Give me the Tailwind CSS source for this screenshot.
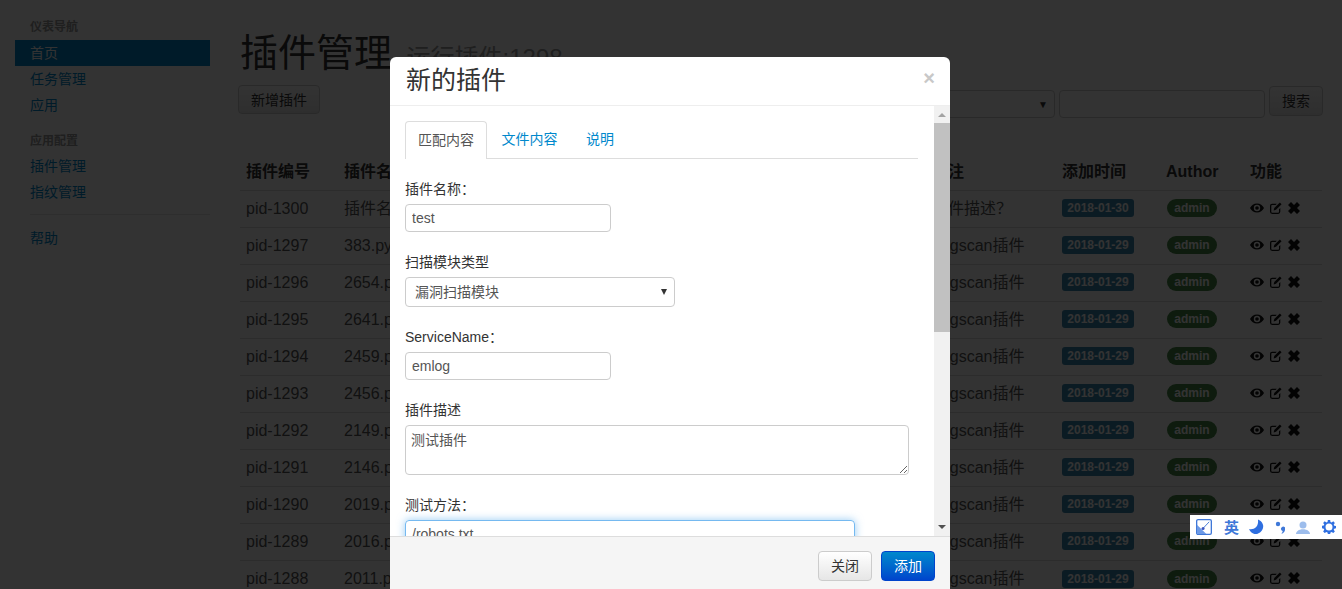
<!DOCTYPE html>
<html lang="en">
<head>
    <meta charset="UTF-8">
    <meta name="viewport" content="width=device-width, initial-scale=1.0">
    <title>插件管理</title>
    <script src="https://cdn.jsdelivr.net/npm/@tailwindcss/browser@4"></script>
</head>
<body class="relative h-[589px] overflow-hidden bg-white text-[#333] [font-family:'Liberation_Sans','Noto_Sans_CJK_SC',sans-serif]">
    <svg class="hidden">
        <symbol id="eye" viewBox="0 0 14 14"><path fill-rule="evenodd" d="M7 2.5C3.8 2.5 1.3 4.600 0 7c1.300 2.400 3.800 4.500 7 4.500s5.700-2.100 7-4.500c-1.300-2.400-3.800-4.500-7-4.500zM7 3.800a3.200 3.200 0 1 1 0 6.400 3.200 3.200 0 0 1 0-6.400zM7 5.200a1.800 1.800 0 1 0 0 3.600 1.800 1.800 0 0 0 0-3.600z"/></symbol>
        <symbol id="edit" viewBox="0 0 14 14"><path d="M2.500 2H8L6.500 3.500h-4a1 1 0 0 0-1 1v7a1 1 0 0 0 1 1h7a1 1 0 0 0 1-1V8.500L12 7v4.500A2.500 2.500 0 0 1 9.500 14h-7A2.500 2.500 0 0 1 0 11.500v-7A2.500 2.500 0 0 1 2.500 2z"/><path d="M11.500.5l2 2-6.500 6.500-2.800.8.800-2.800z"/></symbol>
        <symbol id="del" viewBox="0 0 14 14"><path d="M3.500 0L7 3.500 10.500 0 14 3.500 10.500 7 14 10.500 10.500 14 7 10.500 3.500 14 0 10.500 3.500 7 0 3.500z"/></symbol>
    </svg>

    <div class="flex">
        <!-- sidebar -->
        <div class="w-[240px] shrink-0 pt-[17px] pl-[15px] pr-[30px] text-sm">
            <div class="pl-[15px] h-5 leading-5 text-xs font-bold text-[#999]">仪表导航</div>
            <a class="block mt-[3px] h-[26px] leading-[26px] pl-[15px] bg-[#0088cc] text-white">首页</a>
            <a class="block h-[26px] leading-[26px] pl-[15px] text-[#0088cc]">任务管理</a>
            <a class="block h-[26px] leading-[26px] pl-[15px] text-[#0088cc]">应用</a>
            <div class="pl-[15px] mt-[13px] h-5 leading-5 text-xs font-bold text-[#999]">应用配置</div>
            <a class="block mt-[2px] h-[26px] leading-[26px] pl-[15px] text-[#0088cc]">插件管理</a>
            <a class="block h-[26px] leading-[26px] pl-[15px] text-[#0088cc]">指纹管理</a>
            <div class="mt-[9px] ml-[15px] border-t border-[#e5e5e5]"></div>
            <a class="block mt-[10px] h-[26px] leading-[26px] pl-[15px] text-[#0088cc]">帮助</a>
        </div>

        <!-- main -->
        <div class="w-[1082px] shrink-0 pt-[28px]">
            <h1 class="h-[50px] leading-[50px] text-[38px] whitespace-nowrap">插件管理 <span class="ml-[4px] text-2xl text-[#999]">运行插件:1298</span></h1>
            <div class="mt-[7px] flex items-start justify-between -ml-[2px] -mr-[1px]">
                <button class="h-[29px] w-[82px] rounded border border-[#ccc] bg-linear-to-b from-white to-[#e6e6e6] text-sm">新增插件</button>
                <div class="flex items-start gap-1 mt-[5px]">
                    <div class="relative w-[200px] h-[28px] rounded border border-[#ccc]"><span class="absolute right-[6px] top-[6px] text-[10px] leading-4">▼</span></div>
                    <input class="w-[206px] h-[28px] rounded border border-[#ccc]">
                    <button class="-mt-[4px] w-[54px] h-[30px] rounded border border-[#ccc] bg-linear-to-b from-white to-[#e6e6e6] text-sm">搜索</button>
                </div>
            </div>
            <table class="mt-[34px] w-[1082px] table-fixed border-collapse text-base text-[#555] [&_td]:h-[37px] [&_td]:px-[6px] [&_td]:border-t [&_td]:border-[#ddd]">
                <colgroup><col class="w-[98px]"><col class="w-[588px]"><col class="w-[130px]"><col class="w-[104px]"><col class="w-[84px]"><col class="w-[78px]"></colgroup>
                <thead>
                    <tr class="h-[38px] text-left text-[#333] [&_th]:px-[6px] [&_th]:pt-[2px]"><th>插件编号</th><th>插件名称</th><th>备注</th><th>添加时间</th><th>Author</th><th>功能</th></tr>
                </thead>
                <tbody id="rows"></tbody>
            </table>
        </div>
    </div>

    <!-- backdrop -->
    <div class="absolute inset-0 bg-black/80"></div>

    <!-- modal -->
    <div class="absolute left-[390px] top-[57px] w-[560px] h-[532px] flex flex-col rounded-t-md bg-white">
        <div class="relative h-[49px] shrink-0 border-b border-[#eee] pl-4">
            <h3 class="text-[25px] leading-[47px] text-[#333]">新的插件</h3>
            <span class="absolute right-[15px] top-[11px] text-xl font-bold leading-5 text-[#c8c8c8]">×</span>
        </div>
        <div class="flex h-[430px] shrink-0 overflow-hidden">
            <div class="w-[544px] pl-[15px] pt-[15px] text-sm text-[#333]">
                <div class="flex w-[513px] h-[38px] border-b border-[#ddd] leading-[38px]">
                    <a class="h-[38px] w-[82px] text-center rounded-t border border-b-0 border-[#ddd] bg-white text-[#555] leading-[36px]">匹配内容</a>
                    <a class="w-[85px] text-center text-[#0088cc] leading-[36px]">文件内容</a>
                    <a class="w-[56px] text-center text-[#0088cc] leading-[36px]">说明</a>
                </div>
                <label class="block mt-5 h-5 leading-5">插件名称：</label>
                <input value="test" class="block mt-[5px] w-[206px] h-[28px] rounded border border-[#ccc] px-[6px] text-[#555]">
                <label class="block mt-5 h-5 leading-5">扫描模块类型</label>
                <div class="relative mt-[5px] w-[270px] h-[30px]">
                    <select class="w-full h-full appearance-none rounded border border-[#ccc] px-[9px] text-[#555]"><option>漏洞扫描模块</option></select>
                    <svg class="absolute right-[8px] top-[12px]" width="6" height="6" viewBox="0 0 6 6"><path fill="#333" d="M0 0h6L3 6z"/></svg>
                </div>
                <label class="block mt-5 h-5 leading-5">ServiceName：</label>
                <input value="emlog" class="block mt-[5px] w-[206px] h-[28px] rounded border border-[#ccc] px-[6px] text-[#555]">
                <label class="block mt-5 h-5 leading-5">插件描述</label>
                <textarea class="block mt-[5px] w-[504px] h-[50px] rounded border border-[#ccc] px-[5px] py-[4px] text-[#555]">测试插件</textarea>
                <label class="block mt-5 h-5 leading-5">测试方法：</label>
                <input value="/robots.txt" class="block mt-[5px] w-[450px] h-[28px] rounded border border-[#52a8ec]/80 px-[6px] text-[#555] shadow-[0_0_8px_rgba(82,168,236,0.6)]">
            </div>
            <!-- scrollbar -->
            <div class="relative w-[16px] h-full shrink-0 bg-[#f1f1f1]">
                <svg class="absolute left-[4px] top-[7px]" width="8" height="4" viewBox="0 0 8 4"><path fill="#a3a3a3" d="M4 0l4 4H0z"/></svg>
                <div class="absolute left-0 top-[17px] h-[209px] w-full bg-[#c1c1c1]"></div>
                <svg class="absolute left-[4px] bottom-[7px]" width="8" height="4" viewBox="0 0 8 4"><path fill="#505050" d="M0 0h8L4 4z"/></svg>
            </div>
        </div>
        <div class="flex flex-1 justify-end gap-[9px] border-t border-[#ddd] bg-[#f5f5f5] pt-[14px] pr-[15px] text-sm">
            <button class="w-[54px] h-[30px] rounded border border-[#ccc] bg-linear-to-b from-white to-[#e6e6e6] text-[#333]">关闭</button>
            <button class="w-[54px] h-[30px] rounded border border-[#04c] bg-linear-to-b from-[#0088cc] to-[#0044cc] text-white">添加</button>
        </div>
    </div>

    <!-- input method toolbar -->
    <div class="absolute left-[1190px] top-[515px] flex h-[24px] w-[152px] items-center bg-white">
        <svg class="ml-[6px]" width="16" height="16" viewBox="0 0 17 17"><rect x=".7" y=".7" width="15.6" height="15.6" rx="1.5" fill="#fff" stroke="#3f78d8" stroke-width="1.4"/><path fill="#6d9ae6" d="M1 6l10 10H2a1 1 0 0 1-1-1z"/><path stroke="#3f78d8" d="M7 10.5L14 3"/><circle cx="7.5" cy="10" r="1.6" fill="#3a55c0"/></svg>
        <span class="ml-[12px] w-[15px] text-[15px] leading-[15px] font-bold text-[#3f78d8]">英</span>
        <svg class="ml-[10px]" width="15" height="16" viewBox="0 0 15 16"><path fill="#2f6fe0" d="M9 .5C13 2 15 6 14 9C13 13 9 15.5 5.5 15C3 14.5 1 12.5 0 10C4 11 10 9 9 .5z"/></svg>
        <svg class="ml-[11px]" width="10" height="14" viewBox="0 0 10 14"><circle cx="3" cy="4" r="2.2" fill="#3f78d8"/><path fill="#3f78d8" d="M6 8.5a2.2 2.2 0 1 1 4 1.500c-.3 1.700-1.500 3-3 3.800l-.5-.6c.8-.7 1.200-1.400 1.200-2.200a2.200 2.200 0 0 1-1.700-2.500z"/></svg>
        <svg class="ml-[11px]" width="14" height="15" viewBox="0 0 16 15"><circle cx="8" cy="4.5" r="4" fill="#9dbdec"/><path fill="#9dbdec" d="M0 15c0-3 3-5.500 8-5.500S16 12 16 15z"/></svg>
        <svg class="ml-[12px]" width="14" height="14" viewBox="0 0 16 16"><path fill="#2f6fe0" fill-rule="evenodd" d="M6.700 0h2.600l.4 2.200 1.300.6 1.900-1.300 1.800 1.800-1.300 1.900.6 1.300 2 .4v2.600l-2 .4-.6 1.300 1.300 1.900-1.800 1.800-1.900-1.300-1.300.6-.4 2H6.700l-.4-2-1.300-.6-1.900 1.300-1.800-1.800 1.300-1.900-.6-1.300-2-.4V6.700l2-.4.6-1.300L1.300 3.300l1.800-1.800L5 2.800l1.300-.6zM8 4a4 4 0 1 0 0 8 4 4 0 0 0 0-8z"/></svg>
    </div>

    <script>
        const plugins = [
            ['pid-1300', '插件名称', '插件描述？', '2018-01-30'],
            ['pid-1297', '383.py', 'bugscan插件', '2018-01-29'],
            ['pid-1296', '2654.py', 'bugscan插件', '2018-01-29'],
            ['pid-1295', '2641.py', 'bugscan插件', '2018-01-29'],
            ['pid-1294', '2459.py', 'bugscan插件', '2018-01-29'],
            ['pid-1293', '2456.py', 'bugscan插件', '2018-01-29'],
            ['pid-1292', '2149.py', 'bugscan插件', '2018-01-29'],
            ['pid-1291', '2146.py', 'bugscan插件', '2018-01-29'],
            ['pid-1290', '2019.py', 'bugscan插件', '2018-01-29'],
            ['pid-1289', '2016.py', 'bugscan插件', '2018-01-29'],
            ['pid-1288', '2011.py', 'bugscan插件', '2018-01-29'],
        ];
        document.getElementById('rows').innerHTML = plugins.map(p => `
            <tr>
                <td>${p[0]}</td><td>${p[1]}</td><td class="whitespace-nowrap">${p[2]}</td>
                <td><span class="inline-block -translate-y-px h-[18px] w-[72px] rounded-[3px] bg-[#3a87ad] text-center text-xs font-bold leading-[18px] text-white align-middle">${p[3]}</span></td>
                <td><span class="inline-block -translate-y-px ml-px h-[18px] w-[50px] rounded-full bg-[#468847] text-center text-xs font-bold leading-[18px] text-white align-middle">admin</span></td>
                <td><div class="flex -translate-y-px items-center gap-[6px] text-[#111]">
                    <svg class="w-[14px] h-[14px] fill-current"><use href="#eye"/></svg>
                    <svg class="w-[12px] h-[12px] fill-current"><use href="#edit"/></svg>
                    <svg class="w-[12px] h-[12px] fill-current"><use href="#del"/></svg>
                </div></td>
            </tr>`).join('');
    </script>
</body>
</html>
